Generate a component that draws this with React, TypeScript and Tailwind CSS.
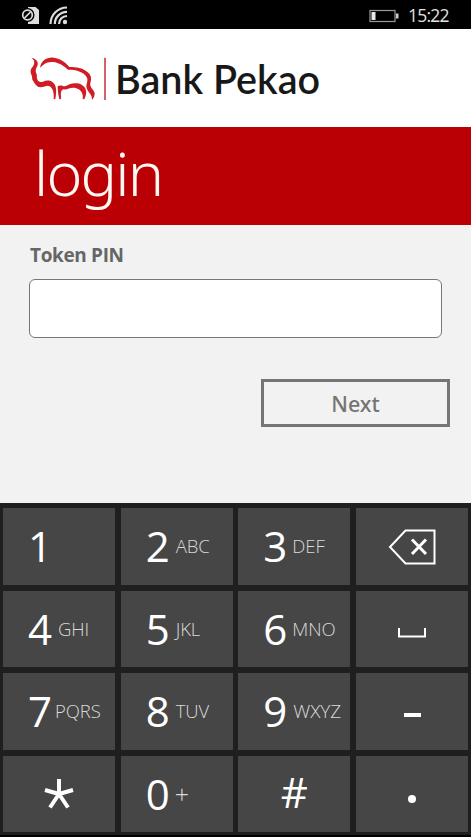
import type { ReactNode } from "react";

const sans = "font-['Open_Sans','Noto_Sans',sans-serif]";

function StatusBar() {
  return (
    <div className="flex h-[29px] items-center justify-between bg-black pl-5 pr-[22px]">
      <svg width="50" height="29" viewBox="20 0 50 29" fill="none">
        <path d="M28 7h7.500l3.500 3v14H28z" fill="#ddd" />
        <circle cx="27.5" cy="15" r="7" fill="#000" />
        <circle cx="27.5" cy="15" r="4.8" stroke="#ddd" strokeWidth="1.7" />
        <path d="M24.5 18l6-6" stroke="#ddd" strokeWidth="1.7" />
        <path d="M50.5 24A16.5 16.5 0 0 1 67 7.5M54.8 24A12.2 12.2 0 0 1 67 11.800M59 24a8 8 0 0 1 8-8" stroke="#ddd" strokeWidth="2.200" />
        <circle cx="65" cy="22" r="2.200" fill="#ddd" />
      </svg>
      <div className="flex items-center">
        <svg width="31" height="14" viewBox="0 0 31 14" fill="none" className="mt-0.5">
          <rect x="1" y="1.500" width="25" height="11" stroke="#999" strokeWidth="1.200" />
          <rect x="2.500" y="3" width="4" height="8" fill="#e8e8e8" />
          <rect x="27" y="4.500" width="2.500" height="5" fill="#ccc" />
        </svg>
        <span className="ml-2 mt-[3px] w-[41px] whitespace-nowrap text-[17.500px] leading-none tracking-[-0.8px] text-[#e2e2e2]">15:22</span>
      </div>
    </div>
  );
}

function Logo() {
  return (
    <div className="flex h-[98px] items-start bg-white pl-5 pt-4">
      <svg className="shrink-0" width="90" height="65" viewBox="0 0 270 195" fill="none">
        <g fill="#d01c24">
          <path d="M34 38C52 42 58 54 50 67C46 75 46 79 50 88C52 94 49 97 52 103C54 111 61 113 69 110C78 106 89 105 97 111C109 119 111 136 106 162L101 163C102 145 100 133 91 125C81 118 75 127 61 127C48 126 44 114 38 106C35 99 38 96 34 89C30 78 31 73 38 65C45 54 45 46 34 38Z" />
          <path d="M60 68C64 47 80 36 101 38C123 40 138 54 148 66C170 66 187 68 203 82C216 93 214 103 211 114C208 127 222 134 224 145C224 153 221 161 216 164C217 150 208 146 202 134C194 119 206 111 201 98C191 79 167 74 144 74C130 62 118 53 99 51C80 49 70 59 60 68Z" />
          <path d="M118 163C115 150 113 137 113 124C121 119 127 124 134 124C145 120 155 113 171 115C194 118 207 137 193 163L188 162C191 147 183 133 167 129C152 125 143 135 130 133C119 137 124 152 123 162Z" />
        </g>
        <path d="M255 38V165" stroke="#c9444e" strokeWidth="5" />
      </svg>
      <span className="ml-[5px] mt-[13px] whitespace-nowrap font-['Lato',sans-serif] text-[39.500px] font-semibold leading-[42px] text-[#181818]">Bank Pekao</span>
    </div>
  );
}

function Key({ children, pad }: { children: ReactNode; pad?: string }) {
  return <div className={`flex min-w-0 items-center bg-[#464646] text-white ${pad ?? "justify-center"}`}>{children}</div>;
}

function Digit({ n, letters, gap, size }: { n: string; letters?: string; gap: string; size?: string }) {
  return (
    <Key pad="pl-[25px]">
      <span className="w-6 shrink-0 text-[42px] leading-[76px] tracking-[-0.5px]">{n}</span>
      {letters && <span className={`${gap} ${size ?? "text-[18.5px]"} whitespace-nowrap font-light leading-[76px] tracking-[-0.1px] text-[#dadada]`}>{letters}</span>}
    </Key>
  );
}

function Keypad() {
  return (
    <div className="h-[334px] border-b-2 border-black bg-[#1f1f1f] pl-[3px] pr-[3px] pt-[5px]">
      <div className="grid h-[324px] grid-cols-4 grid-rows-4 gap-x-[5.700px] gap-y-[6px]">
        <Digit n="1" gap="ml-1.5" />
        <Digit n="2" letters="ABC" gap="ml-[6px]" />
        <Digit n="3" letters="DEF" gap="ml-[5px]" />
        <Key>
          <svg width="50" height="40" viewBox="0 0 50 40" fill="none" stroke="white" className="mt-0.5">
            <path d="M3 20L18.500 3.500H47.500V36.500H18.500Z" strokeWidth="2" />
            <path d="M25 12.500l14 14.500m0-14.500l-14 14.500" strokeWidth="3" />
          </svg>
        </Key>
        <Digit n="4" letters="GHI" gap="ml-1.5" />
        <Digit n="5" letters="JKL" gap="ml-[6px]" />
        <Digit n="6" letters="MNO" gap="ml-[5px]" />
        <Key>
          <svg width="28" height="12" viewBox="0 0 28 12" fill="none" className="mt-2">
            <path d="M1 1v8.500h26V1" stroke="white" strokeWidth="2" />
          </svg>
        </Key>
        <Digit n="7" letters="PQRS" gap="ml-[3px]" />
        <Digit n="8" letters="TUV" gap="ml-[6px]" />
        <Digit n="9" letters="WXYZ" gap="ml-[6px]" size="text-[19px]" />
        <Key><span className="mt-2 h-1 w-[17px] bg-white" /></Key>
        <Key>
          <svg width="30" height="32" viewBox="0 0 30 32" fill="none">
            <path d="M15 16V1M15 16L1 12M15 16L29 12M15 16L6 29.500M15 16L24 29.500" stroke="white" strokeWidth="4" />
          </svg>
        </Key>
        <Digit n="0" letters="+" gap="ml-[5px]" size="text-[25px]" />
        <Key><span className="-mt-1 text-[42px] leading-[76px]">#</span></Key>
        <Key><span className="mt-2.5 size-2 rounded-full bg-white" /></Key>
      </div>
    </div>
  );
}

export default function App() {
  return (
    <main className={`flex h-[837px] w-[471px] flex-col overflow-hidden bg-[#f2f2f2] ${sans}`}>
      <StatusBar />
      <Logo />
      <h1 className="h-[98px] bg-[#ba0005] pl-[34px] font-['Noto_Sans',sans-serif] text-[61px] font-light leading-[92px] tracking-[-1.8px] text-[#fff8f2]">login</h1>
      <section className="flex h-[278px] flex-col">
        <label htmlFor="pin" className="ml-[30px] mt-4 h-[38px] text-[19px] font-bold leading-[28px] tracking-[-0.35px] text-[#666]">Token PIN</label>
        <input id="pin" className="ml-[29px] h-[59px] w-[413px] rounded-[6px] border border-[#777] bg-white" />
        <button className="ml-[261px] mt-[41px] h-[48px] w-[189px] border-[3px] border-[#757575] pt-0.5 font-['Noto_Sans',sans-serif] text-[21.500px] font-medium text-[#757575]">Next</button>
      </section>
      <Keypad />
    </main>
  );
}
